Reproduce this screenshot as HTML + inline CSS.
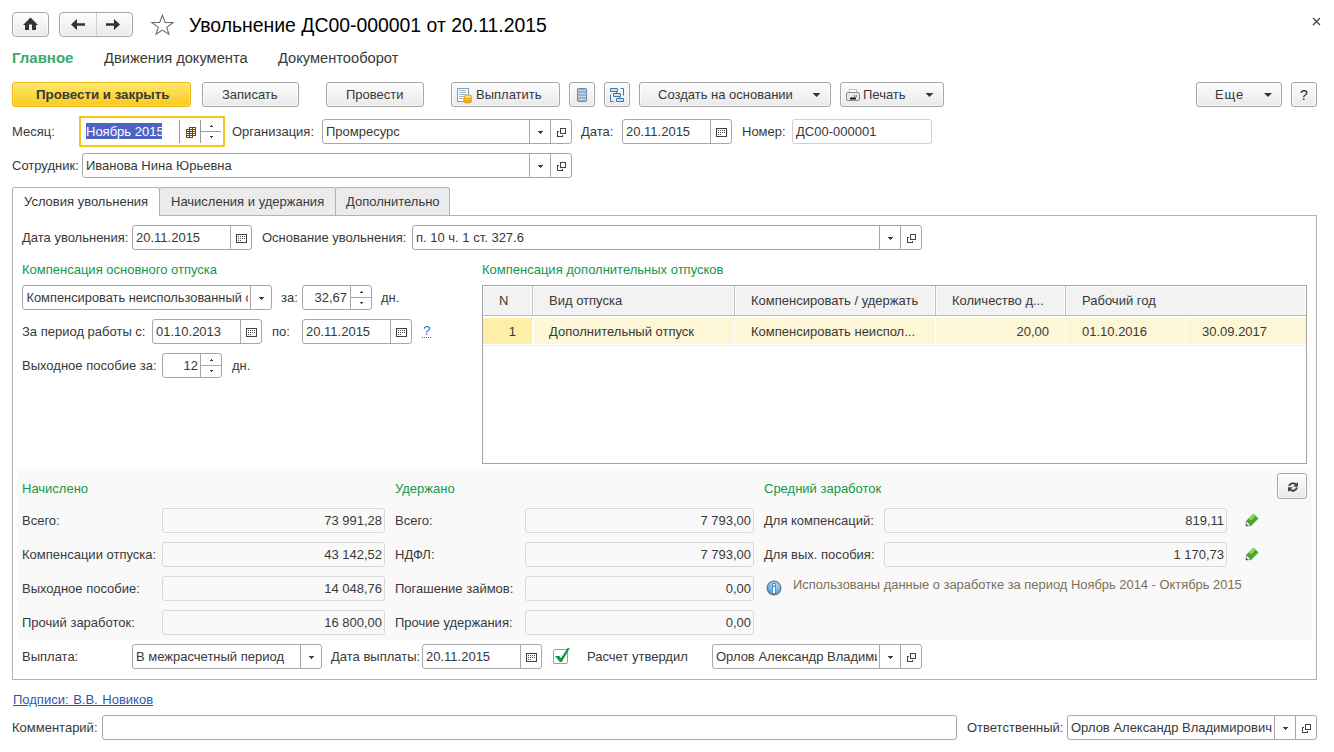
<!DOCTYPE html>
<html><head><meta charset="utf-8"><style>
html,body{margin:0;padding:0;}
body{width:1334px;height:752px;overflow:hidden;background:#fff;position:relative;font-family:"Liberation Sans",sans-serif;}
.a{position:absolute;}
.t{position:absolute;font-size:13px;line-height:15px;color:#393939;white-space:nowrap;}
.inp{position:absolute;box-sizing:border-box;border:1px solid #a8a8a8;border-radius:3px;background:#fff;}
.ro{position:absolute;box-sizing:border-box;border:1px solid #d8d8d8;border-radius:3px;background:#f9f9f9;}
.btn{position:absolute;box-sizing:border-box;border:1px solid #a6a6a6;background:linear-gradient(#fdfdfd,#e9e9e9);box-shadow:inset 0 0 0 1px rgba(255,255,255,0.6);}
svg.ic{position:absolute;left:0;top:0;overflow:visible;}
</style></head><body>
<div class="btn" style="left:12px;top:12px;width:37px;height:25px;border-radius:4px"></div>
<div class="btn" style="left:59px;top:12px;width:74px;height:25px;border-radius:4px"></div>
<div class="a" style="left:96px;top:13px;width:1px;height:23px;background:#d0d0d0;"></div>
<div class="t" style="left:189px;top:15px;font-size:19.4px;line-height:21px;color:#000;">Увольнение ДС00-000001 от 20.11.2015</div>
<div class="t" style="left:12px;top:50px;font-size:15px;line-height:16px;color:#3fa86b;font-weight:bold;">Главное</div>
<div class="t" style="left:104px;top:50px;font-size:14.67px;line-height:16px;">Движения документа</div>
<div class="t" style="left:278px;top:50px;font-size:14.67px;line-height:16px;">Документооборот</div>
<div class="a" style="left:12px;top:82px;width:179px;height:25px;background:linear-gradient(#fde76c,#f9ca1e);border:1px solid #eeb418;box-sizing:border-box;border-radius:3px;box-shadow:inset 0 0 0 1px rgba(255,240,150,0.5);"></div>
<div class="t" style="left:36px;top:87px;font-size:13.3px;line-height:15px;font-weight:bold;">Провести и закрыть</div>
<div class="btn" style="left:202px;top:82px;width:97px;height:25px;border-radius:3px"></div>
<div class="t" style="left:222px;top:87px;">Записать</div>
<div class="btn" style="left:326px;top:82px;width:98px;height:25px;border-radius:3px"></div>
<div class="t" style="left:346px;top:87px;">Провести</div>
<div class="btn" style="left:451px;top:82px;width:109px;height:25px;border-radius:3px"></div>
<div class="t" style="left:476px;top:87px;">Выплатить</div>
<div class="btn" style="left:569px;top:82px;width:26px;height:25px;border-radius:3px"></div>
<div class="btn" style="left:604px;top:82px;width:26px;height:25px;border-radius:3px"></div>
<div class="btn" style="left:639px;top:82px;width:192px;height:25px;border-radius:3px"></div>
<div class="t" style="left:658px;top:87px;">Создать на основании</div>
<div class="btn" style="left:840px;top:82px;width:104px;height:25px;border-radius:3px"></div>
<div class="t" style="left:863px;top:87px;">Печать</div>
<div class="btn" style="left:1196px;top:82px;width:86px;height:25px;border-radius:3px"></div>
<div class="t" style="left:1215px;top:87px;letter-spacing:0.9px;">Еще</div>
<div class="btn" style="left:1291px;top:82px;width:26px;height:25px;border-radius:3px"></div>
<div class="t" style="left:1300px;top:86.5px;font-size:14px;line-height:16px;color:#222;">?</div>
<div class="t" style="left:12px;top:124px;">Месяц:</div>
<div class="a" style="left:79px;top:116px;width:146px;height:31px;background:#fff;border:2px solid #f6c518;box-sizing:border-box;"></div>
<div class="a" style="left:86px;top:123px;width:76px;height:16px;background:#4f63c5;"></div>
<div class="t" style="left:86px;top:124px;color:#fff;">Ноябрь 2015</div>
<div class="a" style="left:179px;top:120px;width:1px;height:23px;background:#9a9a9a;"></div>
<div class="a" style="left:200px;top:120px;width:1px;height:23px;background:#9a9a9a;"></div>
<div class="a" style="left:200px;top:131px;width:21px;height:1px;background:#9a9a9a;"></div>
<div class="t" style="left:232px;top:124px;">Организация:</div>
<div class="inp" style="left:322px;top:119px;width:250px;height:25px;"></div>
<div class="a" style="left:529px;top:120px;width:1px;height:23px;background:#a8a8a8;"></div>
<div class="a" style="left:550px;top:120px;width:1px;height:23px;background:#a8a8a8;"></div>
<div class="t" style="left:326px;top:124px;">Промресурс</div>
<div class="t" style="left:581px;top:124px;">Дата:</div>
<div class="inp" style="left:622px;top:119px;width:110px;height:25px;"></div>
<div class="a" style="left:710px;top:120px;width:1px;height:23px;background:#a8a8a8;"></div>
<div class="t" style="left:626px;top:124px;">20.11.2015</div>
<div class="t" style="left:742px;top:124px;">Номер:</div>
<div class="inp" style="left:792px;top:119px;width:140px;height:25px;border-color:#d0d0d0;"></div>
<div class="t" style="left:796px;top:124px;">ДС00-000001</div>
<div class="t" style="left:12px;top:158px;">Сотрудник:</div>
<div class="inp" style="left:82px;top:153px;width:490px;height:25px;"></div>
<div class="a" style="left:529px;top:154px;width:1px;height:23px;background:#a8a8a8;"></div>
<div class="a" style="left:550px;top:154px;width:1px;height:23px;background:#a8a8a8;"></div>
<div class="t" style="left:86px;top:158px;">Иванова Нина Юрьевна</div>
<div class="a" style="left:12px;top:215px;width:1305px;height:465px;border:1px solid #b3b3b3;box-sizing:border-box;"></div>
<div class="a" style="left:159px;top:187px;width:177px;height:28px;border:1px solid #b3b3b3;box-sizing:border-box;border-bottom:none;border-radius:3px 3px 0 0;background:#ebebeb;"></div>
<div class="a" style="left:335px;top:187px;width:115px;height:28px;border:1px solid #b3b3b3;box-sizing:border-box;border-bottom:none;border-radius:3px 3px 0 0;background:#ebebeb;"></div>
<div class="a" style="left:12px;top:187px;width:148px;height:29px;border:1px solid #b3b3b3;box-sizing:border-box;border-bottom:none;border-radius:3px 3px 0 0;background:#fff;"></div>
<div class="t" style="left:24px;top:194px;">Условия увольнения</div>
<div class="t" style="left:171px;top:194px;">Начисления и удержания</div>
<div class="t" style="left:346px;top:194px;">Дополнительно</div>
<div class="t" style="left:22px;top:230px;">Дата увольнения:</div>
<div class="inp" style="left:132px;top:225px;width:120px;height:25px;"></div>
<div class="a" style="left:230px;top:226px;width:1px;height:23px;background:#a8a8a8;"></div>
<div class="t" style="left:136px;top:230px;">20.11.2015</div>
<div class="t" style="left:262px;top:230px;">Основание увольнения:</div>
<div class="inp" style="left:412px;top:225px;width:510px;height:25px;"></div>
<div class="a" style="left:879px;top:226px;width:1px;height:23px;background:#a8a8a8;"></div>
<div class="a" style="left:900px;top:226px;width:1px;height:23px;background:#a8a8a8;"></div>
<div class="t" style="left:416px;top:230px;">п. 10 ч. 1 ст. 327.6</div>
<div class="t" style="left:22px;top:262px;color:#12984a;">Компенсация основного отпуска</div>
<div class="inp" style="left:22px;top:285px;width:250px;height:25px;"></div>
<div class="a" style="left:250px;top:286px;width:1px;height:23px;background:#a8a8a8;"></div>
<div class="a" style="left:23px;top:286px;width:225px;height:23px;overflow:hidden"><div class="t" style="left:3.5px;top:4px;font-size:12.85px;">Компенсировать неиспользованный отпуск</div></div>
<div class="t" style="left:281px;top:290px;">за:</div>
<div class="inp" style="left:302px;top:285px;width:70px;height:25px;"></div>
<div class="a" style="left:350px;top:286px;width:1px;height:23px;background:#a8a8a8;"></div>
<div class="a" style="left:350px;top:297px;width:21px;height:1px;background:#a8a8a8;"></div>
<div class="t" style="right:987px;top:290px;">32,67</div>
<div class="t" style="left:381px;top:290px;">дн.</div>
<div class="t" style="left:22px;top:324px;">За период работы с:</div>
<div class="inp" style="left:152px;top:319px;width:110px;height:25px;"></div>
<div class="a" style="left:240px;top:320px;width:1px;height:23px;background:#a8a8a8;"></div>
<div class="t" style="left:156px;top:324px;">01.10.2013</div>
<div class="t" style="left:272px;top:324px;">по:</div>
<div class="inp" style="left:302px;top:319px;width:110px;height:25px;"></div>
<div class="a" style="left:390px;top:320px;width:1px;height:23px;background:#a8a8a8;"></div>
<div class="t" style="left:306px;top:324px;">20.11.2015</div>
<div class="t" style="left:423px;top:323px;font-size:13.5px;line-height:16px;color:#1f6fc0;">?</div>
<div class="t" style="left:22px;top:358px;">Выходное пособие за:</div>
<div class="inp" style="left:162px;top:353px;width:60px;height:25px;"></div>
<div class="a" style="left:200px;top:354px;width:1px;height:23px;background:#a8a8a8;"></div>
<div class="a" style="left:200px;top:365px;width:21px;height:1px;background:#a8a8a8;"></div>
<div class="t" style="right:1136px;top:358px;">12</div>
<div class="t" style="left:232px;top:358px;">дн.</div>
<div class="t" style="left:482px;top:262px;color:#12984a;">Компенсация дополнительных отпусков</div>
<div class="a" style="left:482px;top:285px;width:825px;height:179px;background:#fff;border:1px solid #a4a4a4;box-sizing:border-box;"></div>
<div class="a" style="left:484px;top:287px;width:47px;height:28px;background:#f2f2f2;"></div>
<div class="a" style="left:532px;top:286px;width:1px;height:30px;background:#bdbdbd;"></div>
<div class="a" style="left:534px;top:287px;width:199px;height:28px;background:#f2f2f2;"></div>
<div class="a" style="left:734px;top:286px;width:1px;height:30px;background:#bdbdbd;"></div>
<div class="a" style="left:736px;top:287px;width:198px;height:28px;background:#f2f2f2;"></div>
<div class="a" style="left:935px;top:286px;width:1px;height:30px;background:#bdbdbd;"></div>
<div class="a" style="left:937px;top:287px;width:127px;height:28px;background:#f2f2f2;"></div>
<div class="a" style="left:1065px;top:286px;width:1px;height:30px;background:#bdbdbd;"></div>
<div class="a" style="left:1067px;top:287px;width:238px;height:28px;background:#f2f2f2;"></div>
<div class="a" style="left:483px;top:315px;width:823px;height:1px;background:#bdbdbd;"></div>
<div class="a" style="left:483px;top:318px;width:49px;height:26px;background:#fdeea8;"></div>
<div class="a" style="left:534px;top:318px;width:200px;height:26px;background:#fdf7d7;"></div>
<div class="a" style="left:735px;top:318px;width:200px;height:26px;background:#fdf7d7;"></div>
<div class="a" style="left:936px;top:318px;width:129px;height:26px;background:#fdf7d7;"></div>
<div class="a" style="left:1066px;top:318px;width:119px;height:26px;background:#fdf7d7;"></div>
<div class="a" style="left:1186px;top:318px;width:120px;height:26px;background:#fdf7d7;"></div>
<div class="a" style="left:483px;top:345px;width:823px;height:1px;background:#ececec;"></div>
<div class="t" style="left:499px;top:293px;">N</div>
<div class="t" style="left:549px;top:293px;">Вид отпуска</div>
<div class="t" style="left:751px;top:293px;">Компенсировать / удержать</div>
<div class="t" style="left:952px;top:293px;">Количество д...</div>
<div class="t" style="left:1082px;top:293px;">Рабочий год</div>
<div class="t" style="right:818px;top:324px;">1</div>
<div class="t" style="left:549px;top:324px;">Дополнительный отпуск</div>
<div class="t" style="left:751px;top:324px;">Компенсировать неиспол...</div>
<div class="t" style="right:285px;top:324px;">20,00</div>
<div class="t" style="left:1082px;top:324px;">01.10.2016</div>
<div class="t" style="left:1202px;top:324px;">30.09.2017</div>
<div class="a" style="left:17px;top:469px;width:1295px;height:171px;background:#f9f9f9;"></div>
<div class="t" style="left:22px;top:481px;color:#12984a;">Начислено</div>
<div class="t" style="left:395px;top:481px;color:#12984a;">Удержано</div>
<div class="t" style="left:764px;top:481px;color:#12984a;">Средний заработок</div>
<div class="btn" style="left:1277px;top:473px;width:30px;height:26px;border-radius:3px"></div>
<div class="t" style="left:22px;top:513px;">Всего:</div>
<div class="ro" style="left:162px;top:508px;width:223px;height:25px;"></div>
<div class="t" style="right:952px;top:513px;">73 991,28</div>
<div class="t" style="left:22px;top:547px;">Компенсации отпуска:</div>
<div class="ro" style="left:162px;top:542px;width:223px;height:25px;"></div>
<div class="t" style="right:952px;top:547px;">43 142,52</div>
<div class="t" style="left:22px;top:581px;">Выходное пособие:</div>
<div class="ro" style="left:162px;top:576px;width:223px;height:25px;"></div>
<div class="t" style="right:952px;top:581px;">14 048,76</div>
<div class="t" style="left:22px;top:615px;">Прочий заработок:</div>
<div class="ro" style="left:162px;top:610px;width:223px;height:25px;"></div>
<div class="t" style="right:952px;top:615px;">16 800,00</div>
<div class="t" style="left:395px;top:513px;">Всего:</div>
<div class="ro" style="left:525px;top:508px;width:229px;height:25px;"></div>
<div class="t" style="right:583px;top:513px;">7 793,00</div>
<div class="t" style="left:395px;top:547px;">НДФЛ:</div>
<div class="ro" style="left:525px;top:542px;width:229px;height:25px;"></div>
<div class="t" style="right:583px;top:547px;">7 793,00</div>
<div class="t" style="left:395px;top:581px;">Погашение займов:</div>
<div class="ro" style="left:525px;top:576px;width:229px;height:25px;"></div>
<div class="t" style="right:583px;top:581px;">0,00</div>
<div class="t" style="left:395px;top:615px;">Прочие удержания:</div>
<div class="ro" style="left:525px;top:610px;width:229px;height:25px;"></div>
<div class="t" style="right:583px;top:615px;">0,00</div>
<div class="t" style="left:764px;top:513px;">Для компенсаций:</div>
<div class="ro" style="left:884px;top:508px;width:343px;height:25px;"></div>
<div class="t" style="right:110px;top:513px;">819,11</div>
<div class="t" style="left:764px;top:547px;">Для вых. пособия:</div>
<div class="ro" style="left:884px;top:542px;width:343px;height:25px;"></div>
<div class="t" style="right:110px;top:547px;">1 170,73</div>
<div class="t" style="left:793px;top:577px;color:#7c7058;font-size:12.92px;">Использованы данные о заработке за период Ноябрь 2014 - Октябрь 2015</div>
<div class="t" style="left:22px;top:649px;">Выплата:</div>
<div class="inp" style="left:132px;top:644px;width:190px;height:25px;"></div>
<div class="a" style="left:300px;top:645px;width:1px;height:23px;background:#a8a8a8;"></div>
<div class="t" style="left:136px;top:649px;">В межрасчетный период</div>
<div class="t" style="left:331px;top:649px;">Дата выплаты:</div>
<div class="inp" style="left:422px;top:644px;width:120px;height:25px;"></div>
<div class="a" style="left:520px;top:645px;width:1px;height:23px;background:#a8a8a8;"></div>
<div class="t" style="left:426px;top:649px;">20.11.2015</div>
<div class="a" style="left:553px;top:649px;width:15px;height:15px;background:#fff;border:1px solid #a0a0a0;box-sizing:border-box;border-radius:2px;"></div>
<div class="t" style="left:587px;top:649px;">Расчет утвердил</div>
<div class="inp" style="left:712px;top:644px;width:210px;height:25px;"></div>
<div class="a" style="left:879px;top:645px;width:1px;height:23px;background:#a8a8a8;"></div>
<div class="a" style="left:900px;top:645px;width:1px;height:23px;background:#a8a8a8;"></div>
<div class="a" style="left:713px;top:645px;width:164px;height:23px;overflow:hidden"><div class="t" style="left:3px;top:4px;">Орлов Александр Владимирович</div></div>
<div class="t" style="left:13px;top:692px;color:#1f5bb8;text-decoration:underline;word-spacing:1px;">Подписи: В.В. Новиков</div>
<div class="t" style="left:12px;top:720px;">Комментарий:</div>
<div class="inp" style="left:102px;top:715px;width:855px;height:25px;"></div>
<div class="t" style="left:967px;top:720px;">Ответственный:</div>
<div class="inp" style="left:1067px;top:715px;width:250px;height:25px;"></div>
<div class="a" style="left:1274px;top:716px;width:1px;height:23px;background:#a8a8a8;"></div>
<div class="a" style="left:1295px;top:716px;width:1px;height:23px;background:#a8a8a8;"></div>
<div class="t" style="left:1071px;top:720px;">Орлов Александр Владимирович</div>
<svg class="ic" width="1334" height="752" viewBox="0 0 1334 752">
<path d="M23 25 L30.5 17.5 L38 25 L36 25 L36 30 L32 30 L32 24.5 L29 24.5 L29 30 L25 30 L25 25 Z" fill="#333"/>
<path d="M71 24.5 L77 19 L77 23.2 L85 23.2 L85 25.8 L77 25.8 L77 30 Z" fill="#333"/>
<path d="M120 24.5 L114 19 L114 23.2 L106 23.2 L106 25.8 L114 25.8 L114 30 Z" fill="#333"/>
<path d="M162.4 15.2 L165.1 22.5 L173.1 22.5 L166.8 27.4 L168.9 34.2 L162.4 30.1 L156.1 34.2 L158.3 27.4 L151.9 22.5 L159.7 22.5 Z" fill="none" stroke="#6a6a6a" stroke-width="1.1"/>
<path d="M1313 18 L1320 25 M1320 18 L1313 25" stroke="#444" stroke-width="1.3"/>
<rect x="457.5" y="88.5" width="11" height="13" fill="#fff" stroke="#7f9db8"/>
<path d="M459 90.5h7M459 92.5h7M459 94.5h7M459 96.5h5M459 98.5h4" stroke="#9fb6cc" stroke-width="1"/>
<ellipse cx="467.5" cy="101" rx="4" ry="2" fill="#f0b820" stroke="#d88a10" stroke-width="0.8"/>
<ellipse cx="467.5" cy="99" rx="4" ry="2" fill="#f6cf30" stroke="#d88a10" stroke-width="0.8"/>
<ellipse cx="468" cy="96.8" rx="3.8" ry="1.9" fill="#fde060" stroke="#d88a10" stroke-width="0.8"/>
<rect x="577" y="88" width="10" height="14" rx="1.8" fill="#6a89a8"/>
<path d="M578 89.6h8v1.8h-8z M578 92.6h8v1.8h-8z M578 95.6h8v1.8h-8z M578 98.6h8v1.8h-8z" fill="#c4d6e6"/>
<path d="M610.5 88.5h7v3h-7z M613.5 93.5h7v3h-7z M616.5 98.5h7v3h-7z" fill="#cfe0ee" stroke="#3e78a8"/>
<path d="M616.5 91.5v2 M619.5 96.5v2 M620.5 88.5h3v7 M610.5 94.5v7h3" fill="none" stroke="#3e78a8"/>
<path d="M812.5 93h8l-4 4z" fill="#333"/>
<rect x="849.5" y="89.5" width="7" height="4" fill="#fff" stroke="#a9c3d9"/>
<rect x="846.5" y="92.5" width="13" height="8" rx="1.5" fill="#e8e8e8" stroke="#8a8a8a"/>
<rect x="850" y="97.5" width="6" height="2" fill="#111"/>
<circle cx="854.5" cy="96" r="0.8" fill="#e03020"/><circle cx="856.5" cy="96" r="0.8" fill="#20a030"/>
<path d="M925.5 93h8l-4 4z" fill="#333"/>
<path d="M1264 93h8l-4 4z" fill="#333"/>
<path d="M210 126h3v1h-3z M211 125h1v1h-1z M210 136h3v1h-3z M211 137h1v1h-1z" fill="#404040"/>
<path d="M189 127h7v9h-3v2h-7v-9h3z" fill="#6b4a00"/>
<path d="M190 128h2v1h-2zM193 128h2v1h-2zM187 130h2v1h-2zM190 130h2v1h-2zM193 130h2v1h-2zM187 132h2v1h-2zM190 132h2v1h-2zM193 132h2v1h-2zM187 134h2v1h-2zM190 134h2v1h-2zM193 134h2v1h-2zM187 136h2v1h-2zM190 136h2v1h-2z" fill="#fff"/>
<path d="M538 131h5v1h-1v1h-1v1h-1v-1h-1v-1h-1z" fill="#404040"/>
<path d="M560 128h6v6h-6z M561 129v4h4v-4z" fill="#404040" fill-rule="evenodd"/>
<path d="M557 131h2v1h-1v4h4v-1h1v2h-6z" fill="#404040"/>
<path d="M716 128h11v9h-11z M717 129v7h9v-7z" fill="#404040" fill-rule="evenodd"/>
<path d="M718 130h1v1h-1zM720 130h1v1h-1zM722 130h1v1h-1zM724 130h1v1h-1zM718 132h1v1h-1zM720 132h1v1h-1zM722 132h1v1h-1zM724 132h1v1h-1zM718 134h1v1h-1zM720 134h1v1h-1z" fill="#505050"/>
<path d="M538 165h5v1h-1v1h-1v1h-1v-1h-1v-1h-1z" fill="#404040"/>
<path d="M560 162h6v6h-6z M561 163v4h4v-4z" fill="#404040" fill-rule="evenodd"/>
<path d="M557 165h2v1h-1v4h4v-1h1v2h-6z" fill="#404040"/>
<path d="M236 234h11v9h-11z M237 235v7h9v-7z" fill="#404040" fill-rule="evenodd"/>
<path d="M238 236h1v1h-1zM240 236h1v1h-1zM242 236h1v1h-1zM244 236h1v1h-1zM238 238h1v1h-1zM240 238h1v1h-1zM242 238h1v1h-1zM244 238h1v1h-1zM238 240h1v1h-1zM240 240h1v1h-1z" fill="#505050"/>
<path d="M888 237h5v1h-1v1h-1v1h-1v-1h-1v-1h-1z" fill="#404040"/>
<path d="M910 234h6v6h-6z M911 235v4h4v-4z" fill="#404040" fill-rule="evenodd"/>
<path d="M907 237h2v1h-1v4h4v-1h1v2h-6z" fill="#404040"/>
<path d="M259 297h5v1h-1v1h-1v1h-1v-1h-1v-1h-1z" fill="#404040"/>
<path d="M361 291h1v1h1v1h-3v-1h1z" fill="#404040"/>
<path d="M360 302h3v1h-1v1h-1v-1h-1z" fill="#404040"/>
<path d="M246 328h11v9h-11z M247 329v7h9v-7z" fill="#404040" fill-rule="evenodd"/>
<path d="M248 330h1v1h-1zM250 330h1v1h-1zM252 330h1v1h-1zM254 330h1v1h-1zM248 332h1v1h-1zM250 332h1v1h-1zM252 332h1v1h-1zM254 332h1v1h-1zM248 334h1v1h-1zM250 334h1v1h-1z" fill="#505050"/>
<path d="M396 328h11v9h-11z M397 329v7h9v-7z" fill="#404040" fill-rule="evenodd"/>
<path d="M398 330h1v1h-1zM400 330h1v1h-1zM402 330h1v1h-1zM404 330h1v1h-1zM398 332h1v1h-1zM400 332h1v1h-1zM402 332h1v1h-1zM404 332h1v1h-1zM398 334h1v1h-1zM400 334h1v1h-1z" fill="#505050"/>
<path d="M422 337h1v1h-1zM424 337h1v1h-1zM426 337h1v1h-1zM428 337h1v1h-1zM430 337h1v1h-1z" fill="#1f6fc0"/>
<path d="M211 359h1v1h1v1h-3v-1h1z" fill="#404040"/>
<path d="M210 370h3v1h-1v1h-1v-1h-1z" fill="#404040"/>
<path d="M1289 486 A4.3 4.3 0 0 1 1296 484.5" fill="none" stroke="#444" stroke-width="2"/>
<path d="M1298 482 L1298 486.8 L1293.2 486.8 Z" fill="#444"/>
<path d="M1297 487.5 A4.3 4.3 0 0 1 1290 489.5" fill="none" stroke="#444" stroke-width="2"/>
<path d="M1288 492 L1288 487.2 L1292.8 487.2 Z" fill="#444"/>
<path d="M1246.5 521 L1253.5 514 L1258 518.5 L1251 525.5 Z" fill="#45a820" stroke="#2d7a12" stroke-width="0.6"/>
<path d="M1249 518.5 L1253.5 514 L1255.5 516 L1251 520.5 Z" fill="#8ad860"/>
<path d="M1246 526 L1246.5 521 L1251 525.5 Z" fill="#f0f8ec" stroke="#2d7a12" stroke-width="0.6"/>
<path d="M1246 526 L1246.2 524 L1248 525.8 Z" fill="#1a3a10"/>
<path d="M1246.5 555 L1253.5 548 L1258 552.5 L1251 559.5 Z" fill="#45a820" stroke="#2d7a12" stroke-width="0.6"/>
<path d="M1249 552.5 L1253.5 548 L1255.5 550 L1251 554.5 Z" fill="#8ad860"/>
<path d="M1246 560 L1246.5 555 L1251 559.5 Z" fill="#f0f8ec" stroke="#2d7a12" stroke-width="0.6"/>
<path d="M1246 560 L1246.2 558 L1248 559.8 Z" fill="#1a3a10"/>
<defs><radialGradient id="ig" cx="0.55" cy="0.3" r="0.8"><stop offset="0" stop-color="#b8e0fa"/><stop offset="0.6" stop-color="#6aaee6"/><stop offset="1" stop-color="#3c7fc0"/></radialGradient></defs>
<circle cx="774" cy="588" r="7" fill="url(#ig)" stroke="#5c6670" stroke-width="1"/>
<path d="M772.5 583.5h3v2.5h-3z M772.5 586.5h3v7h-3z" fill="#fff" stroke="#3a78b8" stroke-width="0.8"/>
<path d="M309 656h5v1h-1v1h-1v1h-1v-1h-1v-1h-1z" fill="#404040"/>
<path d="M526 653h11v9h-11z M527 654v7h9v-7z" fill="#404040" fill-rule="evenodd"/>
<path d="M528 655h1v1h-1zM530 655h1v1h-1zM532 655h1v1h-1zM534 655h1v1h-1zM528 657h1v1h-1zM530 657h1v1h-1zM532 657h1v1h-1zM534 657h1v1h-1zM528 659h1v1h-1zM530 659h1v1h-1z" fill="#505050"/>
<path d="M555 656 L559.5 656 L561 658.2 L567.5 648 L569.8 648.3 L561.8 662 L559.8 662 Z" fill="#0f9a48"/>
<path d="M888 656h5v1h-1v1h-1v1h-1v-1h-1v-1h-1z" fill="#404040"/>
<path d="M910 653h6v6h-6z M911 654v4h4v-4z" fill="#404040" fill-rule="evenodd"/>
<path d="M907 656h2v1h-1v4h4v-1h1v2h-6z" fill="#404040"/>
<path d="M1283 727h5v1h-1v1h-1v1h-1v-1h-1v-1h-1z" fill="#404040"/>
<path d="M1305 724h6v6h-6z M1306 725v4h4v-4z" fill="#404040" fill-rule="evenodd"/>
<path d="M1302 727h2v1h-1v4h4v-1h1v2h-6z" fill="#404040"/>
</svg>
</body></html>
